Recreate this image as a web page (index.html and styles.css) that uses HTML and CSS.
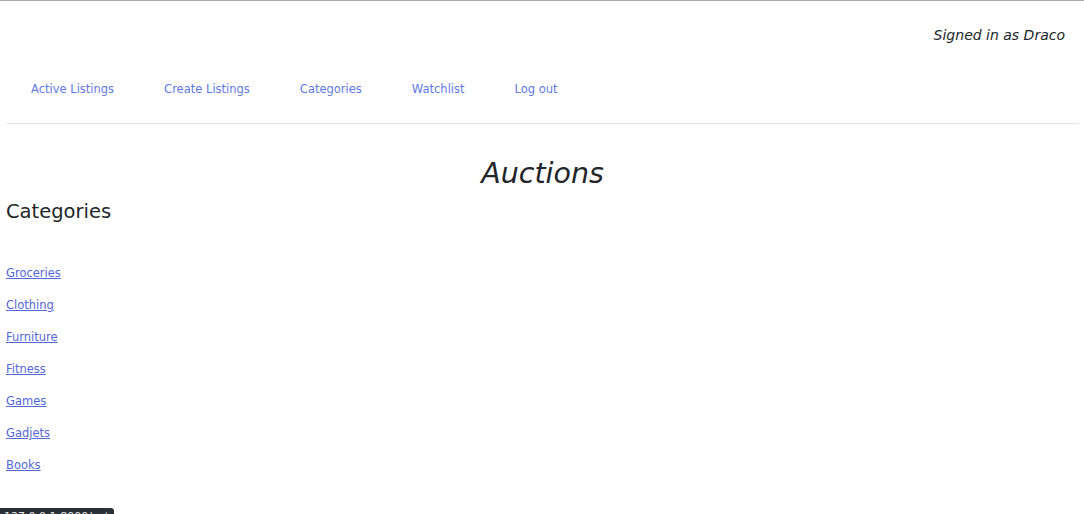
FILE: index.html
```html
<!DOCTYPE html>
<html lang="en">
<head>
<meta charset="utf-8">
<title>Auctions</title>
<link rel="stylesheet" href="styles.css">
</head>
<body>
<div class="page">
  <div class="signed">Signed in as Draco</div>
  <ul class="nav">
    <li><a href="#">Active Listings</a></li>
    <li><a href="#">Create Listings</a></li>
    <li><a href="#">Categories</a></li>
    <li><a href="#">Watchlist</a></li>
    <li><a href="#">Log out</a></li>
  </ul>
  <hr class="rule">
  <h1 class="title">Auctions</h1>
  <h2 class="cat-head">Categories</h2>
  <ul class="cats">
    <li><a href="#">Groceries</a></li>
    <li><a href="#">Clothing</a></li>
    <li><a href="#">Furniture</a></li>
    <li><a href="#">Fitness</a></li>
    <li><a href="#">Games</a></li>
    <li><a href="#">Gadjets</a></li>
    <li><a href="#">Books</a></li>
  </ul>
</div>
<div class="status">127.0.0.1:8000/categories</div>
</body>
</html>
```

FILE: styles.css
```css
html, body {
  margin: 0;
  padding: 0;
  height: 100%;
  overflow: hidden;
  background: #fff;
}
body {
  font-family: "DejaVu Sans", "Liberation Sans", sans-serif;
  color: #212529;
  border-top: 1px solid #a4adb3;
  box-sizing: border-box;
}
.page {
  padding: 0 5px 0 6px;
}
.signed {
  text-align: right;
  font-style: italic;
  font-size: 14px;
  padding: 25px 14px 0 0;
  line-height: 18px;
  color: #212529;
}
.nav {
  list-style: none;
  margin: 0;
  padding: 0;
  display: flex;
  margin-top: 36px;
}
.nav li a {
  display: block;
  padding: 0 25px;
  font-size: 11.5px;
  line-height: 18px;
  color: #5f7ae6;
  text-decoration: none;
}
.rule {
  margin: 25px 0 0 0;
  border: 0;
  border-top: 1px solid #e4e4e4;
  height: 0;
}
.title {
  text-align: center;
  font-style: italic;
  font-weight: normal;
  font-size: 28.5px;
  line-height: 36px;
  margin: 32px 0 0 0;
  color: #212529;
}
.cat-head {
  font-weight: normal;
  font-size: 19.5px;
  line-height: 28px;
  margin: 6px 0 0 0;
  color: #212529;
}
.cats {
  list-style: none;
  margin: 38px 0 0 0;
  padding: 0;
  display: flex;
  flex-direction: column;
  gap: 14px;
}
.cats li {
  line-height: 18px;
  font-size: 11.5px;
}
.cats a {
  color: #5468d8;
  text-decoration: underline;
}
.status {
  position: absolute;
  left: 0;
  top: 508px;
  width: 114px;
  height: 20px;
  background: #2c3136;
  color: #e8e8e8;
  font-family: "DejaVu Sans", sans-serif;
  font-size: 11px;
  line-height: 14px;
  padding: 2px 4px;
  box-sizing: border-box;
  border-top-right-radius: 3px;
  white-space: nowrap;
  overflow: hidden;
}
```
